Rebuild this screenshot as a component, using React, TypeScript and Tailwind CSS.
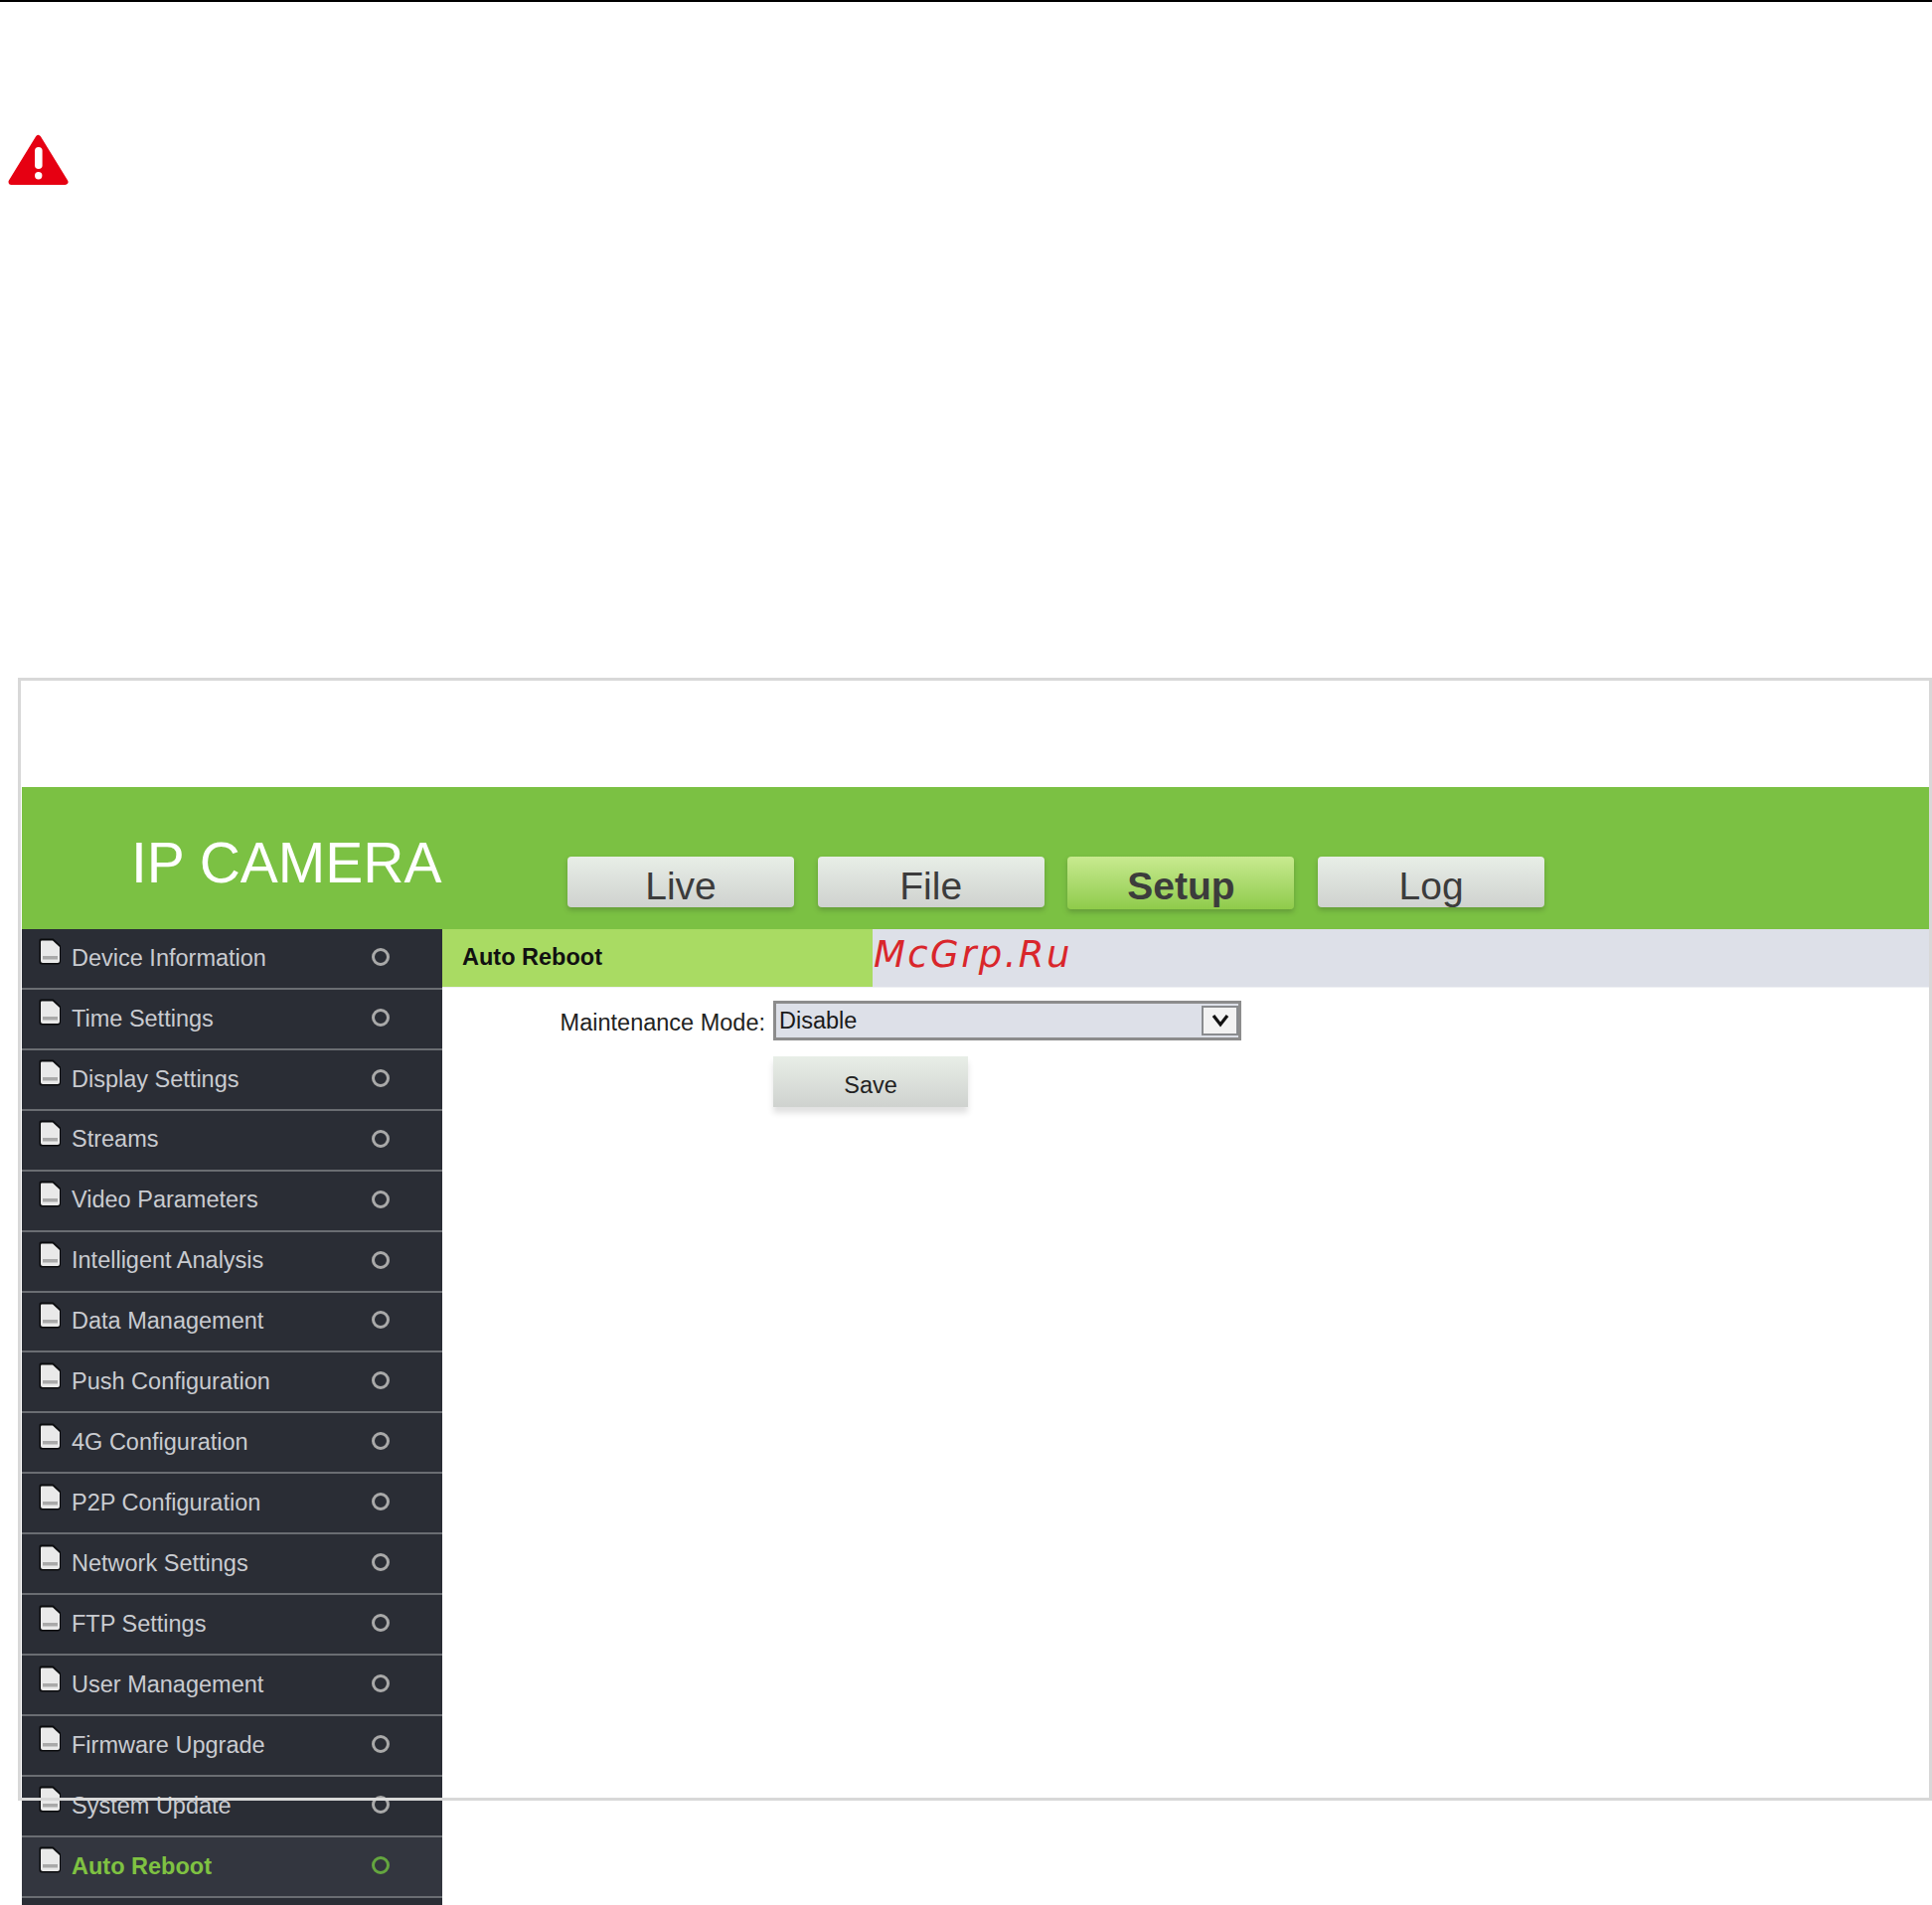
const MENU = [
	"Device Information",
	"Time Settings",
	"Display Settings",
	"Streams",
	"Video Parameters",
	"Intelligent Analysis",
	"Data Management",
	"Push Configuration",
	"4G Configuration",
	"P2P Configuration",
	"Network Settings",
	"FTP Settings",
	"User Management",
	"Firmware Upgrade",
	"System Update",
	"Auto Reboot",
	"",
]

function WarningIcon() {
	return (
		<svg width="61" height="52" viewBox="0 0 61 52" className="block">
			<polygon
				points="30.5,4 57.5,48 3.5,48"
				fill="#e60012"
				stroke="#e60012"
				strokeWidth="6"
				strokeLinejoin="round"
			/>
			<rect x="27" y="13" width="7.6" height="22" rx="3.8" fill="#fff" />
			<circle cx="30.7" cy="41.7" r="3.7" fill="#fff" />
		</svg>
	)
}

function DocIcon() {
	return (
		<svg width="23" height="27" viewBox="0 0 23 27" className="block shrink-0">
			<path
				d="M2 0.5H14.5L22 7.5V23.5Q22 26.5 19 26.5H3Q0.5 26.5 0.5 24V2Q0.5 0.5 2 0.5Z"
				fill="#0b0c0e"
			/>
			<path
				d="M3 2.5H14L21 9V23Q21 25 19 25H4Q2 25 2 23V3.5Q2 2.5 3 2.5Z"
				fill="#e9e9e9"
			/>
			<rect x="4" y="18" width="15" height="3.5" fill="#a9a9a9" />
		</svg>
	)
}

function MenuRow({ label }: { label: string }) {
	const active = label === "Auto Reboot"
	return (
		<div
			className={`flex h-[60.93px] items-center border-b-2 border-[#6a6d72] pl-[17px] pb-[1px] ${
				active ? "bg-[#33363f]" : ""
			}`}
		>
			{label && (
				<>
					<div className="-mt-[12px]">
						<DocIcon />
					</div>
					<span
						className={`ml-[10px] mt-[1px] w-[302px] text-[23.5px] leading-none ${
							active ? "font-bold text-[#7fc242]" : "text-[#c9cbd0]"
						}`}
					>
						{label}
					</span>
					<span
						className={`-mt-[2px] h-[18px] w-[18px] rounded-full border-[3.5px] ${
							active ? "border-[#64a63f]" : "border-[#a9a9a9]"
						}`}
					/>
				</>
			)}
		</div>
	)
}

function NavTab({ label, active }: { label: string; active?: boolean }) {
	return (
		<div
			className={`flex w-[228px] items-center justify-center rounded-[4px] text-[39px] leading-none text-[#3c3c3c] shadow-[0_3px_5px_rgba(60,90,40,0.35)] ${
				active
					? "h-[53px] bg-gradient-to-b from-[#c8ea8f] to-[#8fcb4a] pt-[6px] font-bold"
					: "h-[51px] bg-gradient-to-b from-[#e8eee7] to-[#cfd2cf] pt-[7px]"
			}`}
		>
			{label}
		</div>
	)
}

export default function App() {
	return (
		<div className="relative h-[1917px] w-[1944px] overflow-hidden bg-white font-['Liberation_Sans',Arial,sans-serif]">
			<div className="h-[2px] bg-black" />
			<div className="ml-[8px] mt-[133px]">
				<WarningIcon />
			</div>

			<div className="relative ml-[18px] mt-[495px] h-[1130px] w-[1926px]">
				<div className="pl-[4px] pr-[3px] pt-[110px]">
					<div className="flex h-[143px] bg-[#7bc143]">
						<div className="ml-[110px] mt-[48px] w-[316px] whitespace-nowrap text-[57px] leading-none text-white">
							IP CAMERA
						</div>
						<div className="ml-[123px] flex items-start gap-[23.7px] pt-[70px]">
							<NavTab label="Live" />
							<NavTab label="File" />
							<NavTab label="Setup" active />
							<NavTab label="Log" />
						</div>
					</div>

					<div className="flex">
						<div className="w-[423px] shrink-0 bg-[#2a2d35]">
							{MENU.map((label, i) => (
								<MenuRow key={i} label={label} />
							))}
						</div>
						<div className="min-w-0 flex-1">
							<div className="flex h-[59px] border-b border-[#eef0f3] bg-[#dde0e8]">
								<div className="flex h-[58px] w-[433px] items-center bg-[#a9db63] pl-[20px] text-[23.5px] font-bold text-[#111]">
									Auto Reboot
								</div>
								<div className="ml-[1px] mt-[3px] font-['DejaVu_Sans',sans-serif] text-[37px] italic leading-[46px] tracking-[2.4px] text-[#d9262b]">
									McGrp.Ru
								</div>
							</div>

							<div className="flex items-center pt-[13px]">
								<div className="mt-[5px] w-[325px] text-right text-[23.5px] leading-none text-[#222]">
									Maintenance Mode:
								</div>
								<div className="ml-[8px] flex h-[40px] w-[471px] items-center justify-between border-[3px] border-[#8c8c8c] bg-[#dde0e8] pl-[3px] text-[23.5px] leading-none text-[#1a1a1a]">
									<span className="mt-[2px]">Disable</span>
									<span className="flex h-[30px] w-[37px] items-center justify-center border-2 border-[#8a8c8f] bg-[#f2f2f2]">
										<svg width="20" height="14" viewBox="0 0 20 14">
											<path d="M3 2L10 11L17 2" fill="none" stroke="#111" strokeWidth="3.2" />
										</svg>
									</span>
								</div>
							</div>

							<div className="ml-[333px] mt-[16px] flex h-[51px] w-[196px] items-center justify-center bg-gradient-to-b from-[#e8eee7] to-[#cfd2cf] pt-[9px] text-[23.5px] leading-none text-[#222] shadow-[0_6px_6px_rgba(0,0,0,0.12)]">
								Save
							</div>
						</div>
					</div>
				</div>

				<div className="pointer-events-none absolute inset-0 border-[3px] border-[#d8d8d8]" />
			</div>
		</div>
	)
}
